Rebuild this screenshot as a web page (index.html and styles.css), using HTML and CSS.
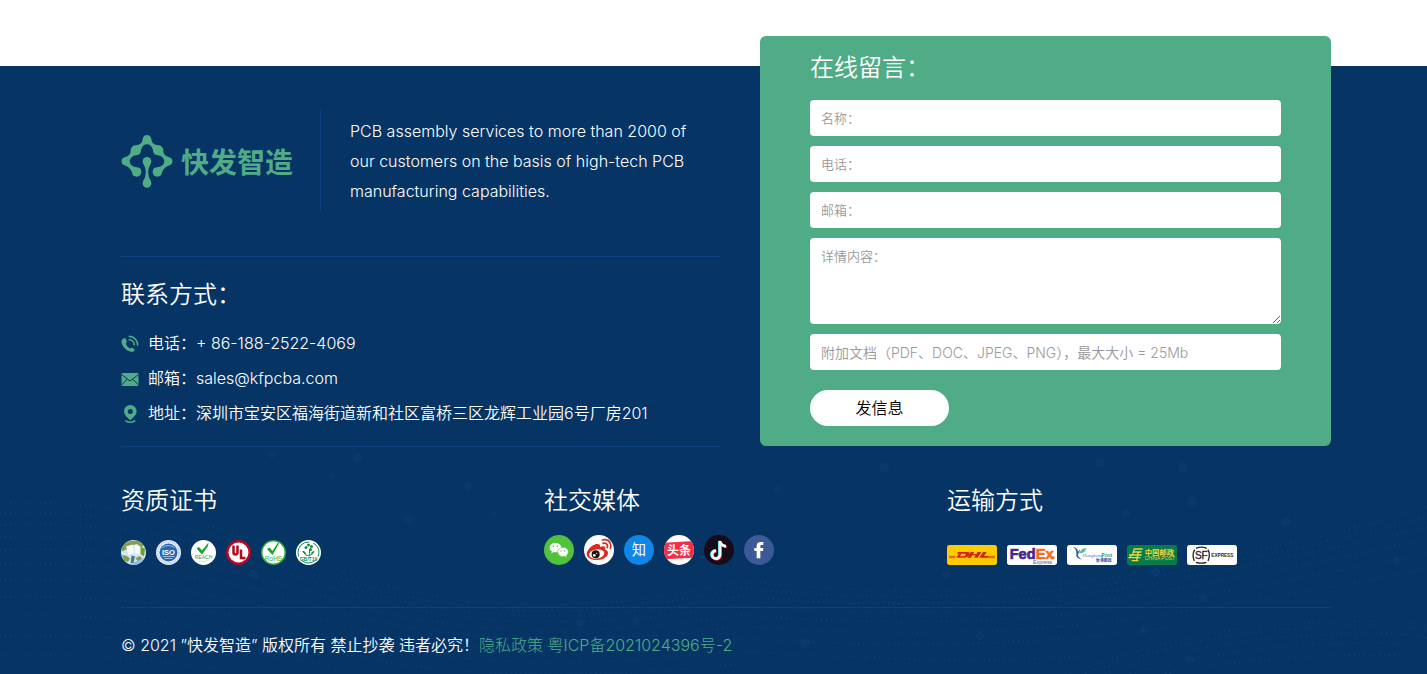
FILE: index.html
```html
<!DOCTYPE html>
<html lang="zh-CN">
<head>
<meta charset="utf-8">
<meta name="viewport" content="width=device-width, initial-scale=1">
<title>快发智造</title>
<link rel="stylesheet" href="styles.css">
</head>
<body>
<footer class="footer">
  <svg class="backdrop" viewBox="0 0 1427 608" preserveAspectRatio="xMidYMax slice" aria-hidden="true">
    <g stroke="#1a5687" stroke-width="1" opacity=".16">
      <path d="M80 390V600M120 380V600M152 400V600M236 380V580M320 390V600M352 230V590M388 250V530M414 400V560M470 380V600M524 390V600M580 170V600M592 200V600M606 390V600M682 400V600M734 390V600M850 380V600M866 390V600M895 390V600M1005 390V600M1061 430V600M1118 430V600M1166 380V600M1261 410V600M1296 380V600M1313 390V600M1355 380V600"/>
    </g>
    <g fill="#17578a" opacity=".16">
      <circle cx="272" cy="388" r="4"/><circle cx="358" cy="392" r="5"/><circle cx="332" cy="410" r="3"/><circle cx="409" cy="453" r="5"/><circle cx="468" cy="420" r="4"/><circle cx="494" cy="448" r="3"/><circle cx="255" cy="509" r="4"/><circle cx="580" cy="557" r="4"/><circle cx="636" cy="555" r="4"/><circle cx="884" cy="401" r="5"/><circle cx="1100" cy="396" r="5"/><circle cx="1183" cy="401" r="5"/><circle cx="1192" cy="436" r="5"/><circle cx="1126" cy="447" r="4"/><circle cx="1286" cy="456" r="5"/><circle cx="1156" cy="506" r="4"/><circle cx="946" cy="509" r="4"/><circle cx="1203" cy="532" r="4"/><circle cx="1144" cy="564" r="4"/><circle cx="980" cy="570" r="4"/><circle cx="805" cy="577" r="5"/><circle cx="1190" cy="593" r="4"/><circle cx="1397" cy="495" r="4"/><circle cx="777" cy="424" r="4"/>
    </g>
    <g fill="none" stroke="#1d6696" stroke-width="2" stroke-dasharray="1 4" opacity=".26">
      <path d="M0 438Q160 430 330 500T740 515Q980 540 1180 500T1427 440"/>
      <path d="M0 448Q160 440 330 507T740 522Q980 546 1180 506T1427 450"/>
      <path d="M0 459Q160 452 330 514T740 530Q980 552 1180 513T1427 461"/>
      <path d="M0 471Q160 464 330 522T740 539Q980 559 1180 522T1427 473"/>
      <path d="M0 484Q160 478 330 532T740 549Q980 568 1180 533T1427 487"/>
      <path d="M0 498Q160 493 330 543T740 560Q980 578 1180 546T1427 502"/>
      <path d="M0 514Q160 509 330 556T740 572Q980 589 1180 560"/>
      <path d="M0 531Q160 527 330 570T740 585Q980 600 1080 590"/>
      <path d="M0 550Q160 546 330 585T740 598M0 570Q160 566 330 600M0 590Q120 586 220 604"/>
      <path d="M1070 608Q1180 565 1290 558T1427 560M1085 608Q1190 570 1290 563T1427 565M1105 608Q1200 576 1300 570T1427 572M1130 608Q1220 584 1310 579T1427 581M1165 608Q1240 593 1320 590T1427 592"/>
    </g>
  </svg>

  <div class="main">
    <div class="about">
      <section class="intro">
        <a class="brand" href="#">
          <svg class="brand-mark" viewBox="0 0 156 159" fill="#4fac86" aria-hidden="true">
            <path d="M65 13a13 13 0 0 1 26 0Q93 30 112 31a15 15 0 0 1 15 15Q126 62 143 66a13 13 0 0 1 3 25Q130 96 123 112a14 14 0 1 1-15-15Q128 96 130 79Q127 62 110 61Q96 59 96 45Q91 28 78 28Q65 28 60 45Q60 59 46 61Q29 62 26 79Q28 96 48 97A14 14 0 1 1 33 112Q26 96 10 91a13 13 0 0 1 3-25Q30 62 29 46a15 15 0 0 1 15-15Q63 30 65 13Z"/>
            <circle cx="78" cy="79" r="13"/><circle cx="78" cy="145" r="13"/>
            <path d="M66 84Q83 112 66 140H90Q73 112 90 84Z"/>
          </svg>
          <span class="brand-name">快发智造</span>
        </a>
        <p class="intro-text">PCB assembly services to more than 2000 of our customers on the basis of high-tech PCB manufacturing capabilities.</p>
      </section>

      <section class="contact">
        <h2 class="title">联系方式：</h2>
        <ul class="contact-list">
          <li class="contact-item">
            <svg class="contact-icon" viewBox="0 0 18 18" aria-hidden="true"><path fill="#4fac86" d="M3.6 3 1.2 4.4Q-.1 6 1 9.2 3.800 15.300 9.800 16.800 12.300 17.200 13.600 15.600L13.900 14.700 10.900 12.500 9.300 13.400Q6.200 12.200 4.700 8.700L5.900 7.100 4.800 3.400Z"/><path fill="none" stroke="#4fac86" stroke-width="1.600" stroke-linecap="round" d="M8.300 1.400A8.400 8.400 0 0 1 16.600 10M8.200 4.800A5 5 0 0 1 13.300 9.800"/></svg>
            <span>电话：+ 86-188-2522-4069</span>
          </li>
          <li class="contact-item">
            <svg class="contact-icon" viewBox="0 0 18 18" aria-hidden="true"><rect x=".5" y="3" width="17" height="13" rx="1" fill="#4fac86"/><path fill="none" stroke="#053465" stroke-width="1" d="M.5 4.500 9 11 17.500 4.500M.5 15 6.300 9M17.500 15 11.700 9"/></svg>
            <span>邮箱：sales@kfpcba.com</span>
          </li>
          <li class="contact-item">
            <svg class="contact-icon" viewBox="0 0 18 18" aria-hidden="true"><path fill="#4fac86" fill-rule="evenodd" d="M9.300 0A6.300 6.300 0 0 0 3 6.300C3 10 6.400 12.500 9.300 15.200 12.200 12.500 15.600 10 15.600 6.300A6.300 6.300 0 0 0 9.300 0Zm0 3.900a2.500 2.500 0 1 1 0 5 2.500 2.500 0 0 1 0-5Z"/><path fill="none" stroke="#4fac86" stroke-width="1.500" d="M4.300 15.500Q5.800 17.200 9.300 17.200T14.300 15.500"/></svg>
            <span>地址：深圳市宝安区福海街道新和社区富桥三区龙辉工业园6号厂房201</span>
          </li>
        </ul>
      </section>
    </div>

    <form class="message">
      <h2 class="title">在线留言：</h2>
      <input class="field" type="text" aria-label="名称" placeholder="名称：">
      <input class="field" type="tel" aria-label="电话" placeholder="电话：">
      <input class="field" type="email" aria-label="邮箱" placeholder="邮箱：">
      <textarea class="field field-area" aria-label="详情内容" placeholder="详情内容："></textarea>
      <input class="field field-file" type="text" aria-label="附加文档" placeholder="附加文档（PDF、DOC、JPEG、PNG），最大大小 = 25Mb">
      <button class="send" type="button">发信息</button>
    </form>
  </div>

  <div class="groups">
    <section class="group">
      <h2 class="title">资质证书</h2>
      <div class="icons">
        <svg class="cert" viewBox="0 0 50 50" role="img" aria-label="环保"><defs><clipPath id="disc"><circle cx="25" cy="25" r="25"/></clipPath></defs><g clip-path="url(#disc)"><path fill="#d5e5ee" d="M0 0h50v50H0z"/><path fill="#7da052" d="M0 12 14 3l22-3 10 10-5 5-9-7-12 3-9 8-9 4zM2 30l10 2 6 5-4 7L6 42zM29 36l9-4 4 5-7 8z"/><path fill="#f8faf5" d="m10 13 13-4 4 17-12 4zM27 10l10 2 3 15-11 2z"/><path fill="#6f9c34" d="m39 14 9 3-2 16-7-5z"/><path fill="#4b7791" d="m21 31 7 2-3 13-6 1z"/><path fill="#92bce2" d="M27 44l19-8-5 14H22z"/></g></svg>
        <svg class="cert" viewBox="0 0 50 50" role="img" aria-label="ISO"><circle cx="25" cy="25" r="25" fill="#e7eef7"/><circle cx="25" cy="25" r="21.500" fill="none" stroke="#86a8d5" stroke-width="2" stroke-dasharray="2 2"/><circle cx="25" cy="25" r="18" fill="#2967b2"/><path d="M13 15Q25 7 37 15M13 33H37M17 37H33" fill="none" stroke="#bdd5ef" stroke-width="1.500"/><text x="25" y="29" text-anchor="middle" font-size="15" class="art-bold" fill="#fff">ISO</text></svg>
        <svg class="cert" viewBox="0 0 50 50" role="img" aria-label="REACH"><circle cx="25" cy="25" r="25" fill="#fff"/><path d="m11 17 5-3 6 7L35 5l-1 7-12 17z" fill="#16a52b"/><text x="25" y="37" text-anchor="middle" font-size="10" class="art" fill="#3f9d3d">REACH</text><path d="M15 42h20" stroke="#a4cf9d"/></svg>
        <svg class="cert" viewBox="0 0 50 50" role="img" aria-label="UL"><circle cx="25" cy="25" r="25" fill="#b30922"/><circle cx="25" cy="25" r="20" fill="#fff"/><path d="M15 11v14q0 4 4 4t4-4V11M30 19v17h9" fill="none" stroke="#b30922" stroke-width="5"/></svg>
        <svg class="cert" viewBox="0 0 50 50" role="img" aria-label="RoHS"><circle cx="25" cy="25" r="23.500" fill="#fff" stroke="#2aac38" stroke-width="3"/><path d="m12 18 5-3 6 7L34 5l2 2-13 23z" fill="#16a52b"/><text x="25" y="42" text-anchor="middle" font-size="13" class="art" fill="#2fae3c">RoHS</text></svg>
        <svg class="cert" viewBox="0 0 50 50" role="img" aria-label="绿色认证"><circle cx="25" cy="25" r="25" fill="#fff"/><g fill="none" stroke="#168a45" stroke-width="2"><circle cx="25" cy="25" r="21" stroke-dasharray="46 8"/><path d="M25 36Q28 27 27 18M25 32Q17 31 14 22M26 31Q33 31 36 23"/></g><g fill="#168a45"><circle cx="25" cy="10" r="3"/><circle cx="31" cy="13" r="3"/><circle cx="20" cy="15" r="3"/><circle cx="29" cy="19" r="3"/><path d="M12 22q7 0 9 6-7-1-9-6zM37 22q-7 1-8 6 6-1 8-6z"/></g><path d="M5 33h40v8H5z" fill="#fff"/><text x="25" y="41" text-anchor="middle" font-size="10" class="art-bold" fill="#168a45">GB/T19</text></svg>
      </div>
    </section>

    <section class="group">
      <h2 class="title">社交媒体</h2>
      <div class="icons">
        <a class="social" href="#" aria-label="微信"><svg viewBox="0 0 90 90"><circle cx="45" cy="45" r="45" fill="#50c23b"/><path d="M34 24c-10 0-17 6-17 14 0 5 3 9 7 11l-2 6 7-4q4 1 8 1c9-1 15-7 15-14 0-8-8-14-18-14z" fill="#fff"/><path d="M57 37c-9 0-16 6-16 14s7 14 16 14l5-1 6 4-1-6q6-4 6-11c0-8-7-14-16-14z" fill="#fff" stroke="#50c23b" stroke-width="2"/><g fill="#50c23b"><circle cx="28" cy="34" r="2.500"/><circle cx="40" cy="34" r="2.500"/><circle cx="51" cy="48" r="2"/><circle cx="62" cy="48" r="2"/></g></svg></a>
        <a class="social" href="#" aria-label="微博"><svg viewBox="0 0 90 90"><circle cx="45" cy="45" r="45" fill="#fff"/><path d="M34 28C22 32 8 47 8 57c0 12 16 18 31 18 19 0 33-10 33-21 0-6-4-9-9-10 3-8-2-13-15-8 2-8-4-11-14-8z" fill="#dc2a1c"/><ellipse cx="38" cy="57" rx="23" ry="14" transform="rotate(-8 38 57)" fill="#fff"/><circle cx="35" cy="58" r="12" fill="#1a1515"/><circle cx="31" cy="61" r="4" fill="#fff"/><circle cx="38" cy="55" r="2" fill="#fff"/><path d="M55 15Q73 11 79 25 82 32 79 40M57 25Q66 23 70 30 71 34 70 38" fill="none" stroke="#dc2a1c" stroke-width="5" stroke-linecap="round"/></svg></a>
        <a class="social" href="#" aria-label="知乎"><svg viewBox="0 0 90 90"><circle cx="45" cy="45" r="45" fill="#1086e8"/><text x="45" y="61" text-anchor="middle" font-size="43" class="art-cjk" fill="#fff">知</text></svg></a>
        <a class="social" href="#" aria-label="头条"><svg viewBox="0 0 90 90"><defs><clipPath id="round"><circle cx="45" cy="45" r="45"/></clipPath></defs><circle cx="45" cy="45" r="45" fill="#fff"/><path d="M0 23 90 18V68L0 73Z" fill="#f72c47" clip-path="url(#round)"/><text x="45" y="59" text-anchor="middle" font-size="36" class="art-cjk-bold" fill="#fff">头条</text></svg></a>
        <a class="social" href="#" aria-label="抖音"><svg viewBox="0 0 90 90"><circle cx="45" cy="45" r="45" fill="#170b1a"/><g fill="none" stroke-width="8"><path d="M46 17V57A12 12 0 1 1 34 46M46 18Q49 31 64 33" stroke="#25e4df"/><path d="M50 20V60A12 12 0 1 1 38 49M50 21Q53 34 68 36" stroke="#f52b52"/><path d="M48 18V58A12 12 0 1 1 36 47M48 19Q51 32 66 34" stroke="#fff"/></g></svg></a>
        <a class="social" href="#" aria-label="Facebook"><svg viewBox="0 0 90 90"><circle cx="45" cy="45" r="45" fill="#3d5a98"/><path d="M38 70V48h-7v-9h7v-6c0-9 5-12 12-12h8v9h-5c-3 0-4 1-4 4v5h9l-1 9h-8v22z" fill="#fff"/></svg></a>
      </div>
    </section>

    <section class="group">
      <h2 class="title">运输方式</h2>
      <div class="icons">
        <svg class="carrier" viewBox="0 0 150 60" role="img" aria-label="DHL"><rect width="150" height="60" rx="8" fill="#fecb00"/><path d="M6 34h20M6 38h18M124 34h20M122 38h22" stroke="#d22318" stroke-width="2"/><path fill="#d22318" fill-rule="evenodd" d="M33 21h30q8 0 3 8-5 9-15 9H28l7-11h8l-4 7h10q5 0 7-5 2-3-2-3H30zM71 21h11l-4 6h10l4-6h11L92 38H81l5-7H76l-4 7H61zM108 21h11l-8 12h14l-3 5H97z"/></svg>
        <svg class="carrier" viewBox="0 0 150 60" role="img" aria-label="FedEx Express"><rect width="150" height="60" rx="8" fill="#fff"/><g stroke-width="2"><text x="8" y="41" font-size="44" class="art-bold" fill="#48278b" stroke="#48278b">Fed<tspan fill="#f36a21" stroke="#f36a21">Ex</tspan></text></g><circle cx="139" cy="38" r="4" fill="#f36a21"/><text x="78" y="58" font-size="16" class="art" fill="#6b4896">Express</text></svg>
        <svg class="carrier" viewBox="0 0 150 60" role="img" aria-label="Hongkong Post"><rect width="150" height="60" rx="8" fill="#fff"/><path d="M17 6q15 2 16 14l7-7q-3 11-7 15-1 9 12 16-20-3-17-20Q28 11 17 6z" fill="#315ca0"/><path d="m36 23 11-12 13-2-8 8 8-1-15 9z" fill="#51b9a5"/><text x="46" y="37" font-size="15" class="art-script" fill="#5378b4">Hongkong</text><text x="103" y="37" font-size="15" class="art-bold" fill="#219c8f">Post</text><text x="86" y="52" font-size="12" class="art-cjk-bold" fill="#315ca0">香港郵政</text></svg>
        <svg class="carrier" viewBox="0 0 150 60" role="img" aria-label="中国邮政"><rect width="150" height="60" rx="8" fill="#087b4b"/><path d="M20 12h27M17 21h27M6 30h38M4 38h36M14 47h20M22 11l-6 20M34 21l-5 25M13 30l-4 9" fill="none" stroke="#f0d63b" stroke-width="4"/><text x="53" y="29" font-size="22" class="art-cjk-bold" fill="#f0d63b">中国邮政</text><text x="53" y="45" font-size="15" class="art" fill="#f0d63b">CHINA POST</text></svg>
        <svg class="carrier" viewBox="0 0 150 60" role="img" aria-label="SF Express"><rect width="150" height="60" rx="8" fill="#fff"/><path d="M27 10Q43 3 59 10M63 14q8 16 0 34M58 52Q43 57 27 52M22 48Q14 30 23 14" fill="none" stroke="#252525" stroke-width="4"/><text x="43" y="41" text-anchor="middle" font-size="30" class="art" fill="#252525" stroke="#252525">SF</text><path d="M52 32h6" stroke="#dc2735" stroke-width="3"/><text x="73" y="36" font-size="14" class="art-bold" fill="#252525">EXPRESS</text></svg>
      </div>
    </section>
  </div>

  <p class="copyright">© 2021 ”快发智造” 版权所有 禁止抄袭 违者必究！<a href="#">隐私政策</a> <a href="#">粤ICP备2021024396号-2</a></p>
</footer>
</body>
</html>
```
FILE: styles.css
```css
* {
  box-sizing: border-box;
}

body {
  margin: 0;
  padding-top: 66px;
  background: #fff;
  color: #fff;
  font-family: Inter, "Noto Sans CJK SC", sans-serif;
  font-size: 16px;
  font-weight: 350;
}

h2,
p,
ul {
  margin: 0;
  padding: 0;
}

a {
  color: inherit;
  text-decoration: none;
}

svg {
  display: block;
}

.footer {
  position: relative;
  padding: 0 96px 14px 121px;
  background: #053465;
}

.backdrop {
  position: absolute;
  inset: 0;
  width: 100%;
  height: 100%;
}

.main,
.groups,
.copyright {
  position: relative;
}

.main {
  display: grid;
  grid-template-columns: minmax(0, 599fr) minmax(0, 571fr);
  column-gap: 40px;
  align-items: start;
}

.title {
  font-size: 24px;
  font-weight: 350;
  line-height: 36px;
}

.intro {
  display: flex;
  align-items: center;
  padding: 44px 0;
  border-bottom: 1px solid #0c4180;
}

.brand {
  display: flex;
  flex: 0 0 200px;
  align-items: center;
  gap: 8px;
  height: 102px;
  border-right: 1px solid #0c4180;
  color: #4fac86;
}

.brand-mark {
  width: 52px;
  height: 53px;
}

.brand-name {
  font-family: "Noto Sans CJK SC", sans-serif;
  font-size: 28px;
  font-weight: 700;
  line-height: 36px;
}

.intro-text {
  padding: 0 16px 0 29px;
  line-height: 30px;
}

.contact {
  padding: 20px 0 15px;
  border-bottom: 1px solid #0c4180;
}

.contact-list {
  margin-top: 13px;
  list-style: none;
}

.contact-item {
  display: flex;
  align-items: center;
  gap: 9px;
  line-height: 35px;
}

.contact-icon {
  flex: none;
  width: 18px;
  height: 18px;
}

.message {
  display: flex;
  flex-direction: column;
  gap: 10px;
  margin-top: -30px;
  padding: 14px 50px 20px;
  border-radius: 6px;
  background: #4fac86;
}

.message .title {
  margin-bottom: 4px;
}

.field {
  width: 100%;
  height: 36px;
  margin: 0;
  padding: 0 11px;
  border: 0;
  border-radius: 4px;
  background: #fff;
  color: #333;
  font: inherit;
  font-size: 13px;
}

.field-area {
  height: 86px;
  padding: 8px 11px;
  line-height: 20px;
  resize: both;
}

.field-file {
  font-size: 14px;
}

.field::placeholder {
  color: #999;
  opacity: 1;
}

.send {
  align-self: flex-start;
  width: 139px;
  height: 36px;
  margin-top: 10px;
  padding: 0 0 2px;
  border: 0;
  border-radius: 18px;
  background: #fff;
  color: #000;
  font: inherit;
}

.groups {
  display: grid;
  grid-template-columns: 423fr 403fr 384fr;
  padding: 36px 0 42px;
  border-bottom: 1px solid #0c4180;
}

.icons {
  display: flex;
  align-items: flex-end;
  gap: 10px;
  height: 46px;
}

.cert {
  width: 25px;
  height: 25px;
}

.social,
.social svg {
  display: block;
  width: 30px;
  height: 30px;
}

.carrier {
  width: 50px;
  height: 20px;
}

.art {
  font-family: "Liberation Sans", sans-serif;
  font-weight: 400;
}

.art-bold {
  font-family: "Liberation Sans", sans-serif;
  font-weight: 700;
}

.art-script {
  font-family: "Liberation Serif", serif;
  font-style: italic;
  font-weight: 400;
}

.art-cjk {
  font-family: "Noto Sans CJK SC", sans-serif;
  font-weight: 400;
}

.art-cjk-bold {
  font-family: "Noto Sans CJK SC", sans-serif;
  font-weight: 700;
}

.copyright {
  padding-top: 22px;
  line-height: 30px;
}

.copyright a {
  color: #4fac86;
  font-weight: 300;
}
```
